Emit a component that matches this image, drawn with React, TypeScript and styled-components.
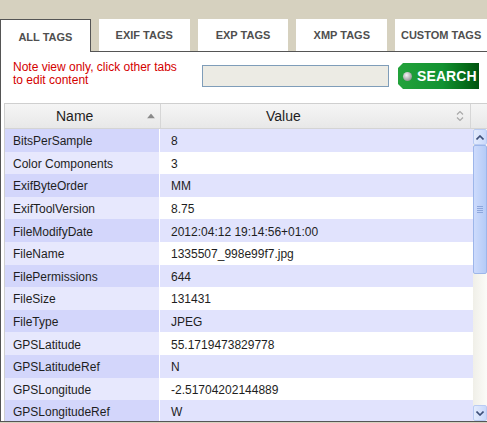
import React from 'react';
import styled, { createGlobalStyle } from 'styled-components';

const GlobalStyle = createGlobalStyle`
  html, body {
    margin: 0;
    padding: 0;
    background: #d6d1bf;
    overflow: hidden;
  }
  * {
    box-sizing: border-box;
  }
`;

const Page = styled.div`
  width: 487px;
  height: 423px;
  padding-top: 19px;
  background: #d6d1bf;
  font-family: 'Liberation Sans', Arial, sans-serif;
  display: flex;
  flex-direction: column;
`;

const TabBar = styled.div`
  display: flex;
  align-items: flex-end;
  gap: 8px;
  height: 32px;
`;

const Tab = styled.div<{ $active?: boolean; $width?: number }>`
  width: ${p => p.$width || 91}px;
  height: ${p => (p.$active ? 33 : 32)}px;
  margin-bottom: ${p => (p.$active ? -1 : 0)}px;
  position: relative;
  z-index: 1;
  background: #fff;
  border: ${p => (p.$active ? '1px solid #555' : 'none')};
  border-bottom: none;
  display: flex;
  align-items: center;
  justify-content: center;
  padding-top: ${p => (p.$active ? 1 : 0)}px;
  font-size: 11px;
  font-weight: bold;
  color: #4f4f4f;
  white-space: nowrap;
`;

const Panel = styled.div`
  height: 371px;
  background: #fff;
  border-top: 1px solid #555;
  border-left: 1px solid #555;
  border-bottom: 1px solid #555;
  display: flex;
  flex-direction: column;
`;

const Toolbar = styled.div`
  height: 51px;
  display: flex;
  align-items: flex-start;
  padding: 9px 0 0 12px;
`;

const Note = styled.div`
  width: 189px;
  font-size: 12px;
  line-height: 13px;
  color: #d40000;
`;

const SearchInput = styled.input`
  width: 187px;
  height: 22px;
  margin-top: 4px;
  background: #ecebe4;
  border: 1px solid #7f9db9;
  padding: 0 4px;
  font-family: inherit;
  font-size: 12px;
  outline: none;
`;

const SearchButton = styled.button`
  margin: 2px 0 0 9px;
  width: 81px;
  height: 26px;
  border: none;
  padding: 0 0 0 5px;
  display: flex;
  align-items: center;
  gap: 5px;
  background: linear-gradient(90deg, #23a23b 0%, #129231 55%, #056a18 85%, #005210 100%);
  clip-path: polygon(5px 0, 100% 0, 100% 100%, 5px 100%, 0 calc(100% - 5px), 0 5px);
  color: #fff;
  font-family: inherit;
  font-size: 14px;
  font-weight: bold;
  letter-spacing: 0.1px;
  cursor: pointer;
`;

const Dot = styled.span`
  width: 9px;
  height: 9px;
  border-radius: 50%;
  background: radial-gradient(circle at 40% 35%, #f4f4f4, #9a9a9a 70%, #6e6e6e);
  flex-shrink: 0;
`;

const Table = styled.div`
  flex: 1;
  margin-left: 3px;
  border-top: 1px solid #cfcfcf;
  border-left: 1px solid #cfcfcf;
  display: flex;
  flex-direction: column;
  min-height: 0;
`;

const HeaderRow = styled.div`
  height: 25px;
  display: flex;
  background: linear-gradient(#f5f5f5, #e8e8e8);
  border-bottom: 1px solid #d4d4d4;
`;

const HeadCell = styled.div<{ $width: number; $pad: number }>`
  width: ${p => p.$width}px;
  padding-left: ${p => p.$pad}px;
  border-right: 1px solid #d6d6d6;
  display: flex;
  align-items: center;
  position: relative;
  font-size: 14px;
  color: #1e1e1e;
`;

const SortIcon = styled.span<{ $right: number }>`
  position: absolute;
  right: ${p => p.$right}px;
  top: 50%;
  transform: translateY(-50%);
  display: flex;
`;

const Body = styled.div`
  flex: 1;
  display: flex;
  min-height: 0;
`;

const Rows = styled.div`
  flex: 1;
  overflow: hidden;
`;

const Row = styled.div`
  height: 22.6px;
  display: grid;
  grid-template-columns: 155px 1fr;
  font-size: 12px;
  color: #1e1e1e;
`;

const NameCell = styled.div<{ $odd: boolean }>`
  background: ${p => (p.$odd ? '#d3d6fb' : '#e7e8fd')};
  border-right: 1px solid #fff;
  padding: 2px 0 0 8px;
  display: flex;
  align-items: center;
`;

const ValueCell = styled.div<{ $odd: boolean }>`
  background: ${p => (p.$odd ? '#e1e3fd' : '#fff')};
  padding: 2px 0 0 11px;
  display: flex;
  align-items: center;
`;

const Scrollbar = styled.div`
  width: 14px;
  display: flex;
  flex-direction: column;
  background: linear-gradient(90deg, #f0efe8, #fbfbf8);
`;

const ScrollButton = styled.div`
  height: 16px;
  background: linear-gradient(90deg, #e4ecfd, #c9d8fb);
  border: 1px solid #b9cbf3;
  border-radius: 2px;
  display: flex;
  align-items: center;
  justify-content: center;
`;

const Thumb = styled.div`
  height: 129px;
  background: linear-gradient(90deg, #cddbfc, #b5cbf7);
  border: 1px solid #9db6ea;
  border-radius: 2px;
  display: flex;
  align-items: center;
  justify-content: center;
`;

const Grip = styled.div`
  width: 6px;
  height: 7px;
  background: repeating-linear-gradient(#8ea7dc 0 1px, transparent 1px 2px);
`;

const Track = styled.div`
  flex: 1;
`;

const tabs = ['ALL TAGS', 'EXIF TAGS', 'EXP TAGS', 'XMP TAGS', 'CUSTOM TAGS'];

const tags: [string, string][] = [
  ['BitsPerSample', '8'],
  ['Color Components', '3'],
  ['ExifByteOrder', 'MM'],
  ['ExifToolVersion', '8.75'],
  ['FileModifyDate', '2012:04:12 19:14:56+01:00'],
  ['FileName', '1335507_998e99f7.jpg'],
  ['FilePermissions', '644'],
  ['FileSize', '131431'],
  ['FileType', 'JPEG'],
  ['GPSLatitude', '55.1719473829778'],
  ['GPSLatitudeRef', 'N'],
  ['GPSLongitude', '-2.51704202144889'],
  ['GPSLongitudeRef', 'W'],
];

const App: React.FC = () => {
  return (
    <>
      <GlobalStyle />
      <Page>
        <TabBar>
          {tabs.map((t, i) => (
            <Tab key={t} $active={i === 0} $width={i === 4 ? 92 : 91}>
              {t}
            </Tab>
          ))}
        </TabBar>

        <Panel>
          <Toolbar>
            <Note>
              Note view only, click other tabs
              <br />
              to edit content
            </Note>
            <SearchInput type="text" />
            <SearchButton>
              <Dot />
              SEARCH
            </SearchButton>
          </Toolbar>

          <Table>
            <HeaderRow>
              <HeadCell $width={156} $pad={51}>
                Name
                <SortIcon $right={5}>
                  <svg width="8" height="5" viewBox="0 0 8 5">
                    <path d="M0 5 L4 0 L8 5 Z" fill="#8a8a8a" />
                  </svg>
                </SortIcon>
              </HeadCell>
              <HeadCell $width={310} $pad={105}>
                Value
                <SortIcon $right={6}>
                  <svg width="8" height="11" viewBox="0 0 8 11">
                    <path d="M1 4 L4 1 L7 4 M1 7 L4 10 L7 7" fill="none" stroke="#a8a8a8" strokeWidth="1.2" />
                  </svg>
                </SortIcon>
              </HeadCell>
            </HeaderRow>

            <Body>
              <Rows>
                {tags.map(([name, value], i) => (
                  <Row key={name}>
                    <NameCell $odd={i % 2 === 0}>{name}</NameCell>
                    <ValueCell $odd={i % 2 === 0}>{value}</ValueCell>
                  </Row>
                ))}
              </Rows>
              <Scrollbar>
                <ScrollButton>
                  <svg width="8" height="5" viewBox="0 0 8 5">
                    <path d="M0.5 4.5 L4 1 L7.5 4.5" fill="none" stroke="#3d4f78" strokeWidth="1.6" />
                  </svg>
                </ScrollButton>
                <Thumb>
                  <Grip />
                </Thumb>
                <Track />
                <ScrollButton>
                  <svg width="8" height="5" viewBox="0 0 8 5">
                    <path d="M0.5 0.5 L4 4 L7.5 0.5" fill="none" stroke="#3d4f78" strokeWidth="1.6" />
                  </svg>
                </ScrollButton>
              </Scrollbar>
            </Body>
          </Table>
        </Panel>
      </Page>
    </>
  );
};

export default App;
